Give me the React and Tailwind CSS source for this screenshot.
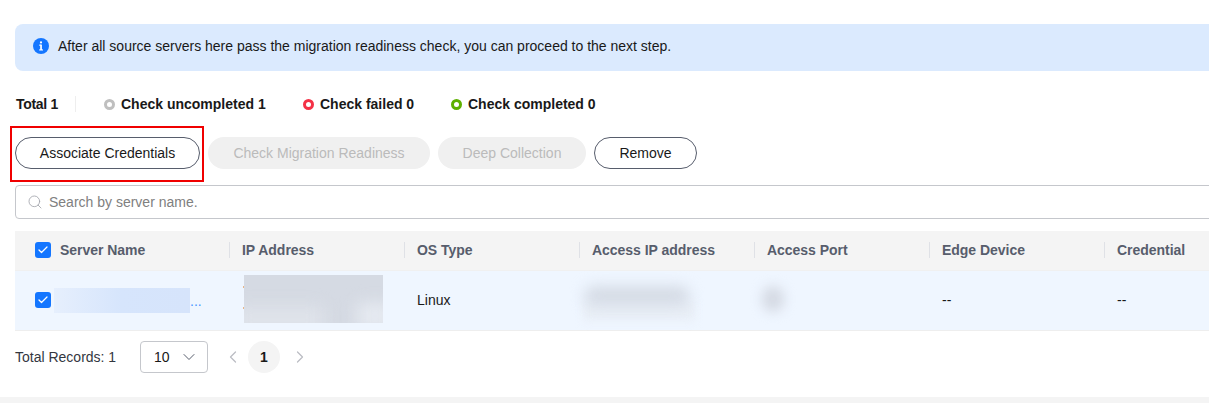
import React from "react";
import { ChevronDown, ChevronLeft, ChevronRight, Search, Check } from "lucide-react";

function Box() {
  return (
    <span className="flex h-4 w-4 shrink-0 items-center justify-center rounded-[3px] bg-[#1476ff]">
      <Check size={12} strokeWidth={2.5} color="#fff" />
    </span>
  );
}

function Stat({ ring, label, className }) {
  return (
    <div className={`flex items-center whitespace-nowrap ${className}`}>
      <span className={`h-[11px] w-[11px] shrink-0 rounded-full border-[3px] ${ring}`} />
      <span className="ml-[6px] font-bold text-[#191919]">{label}</span>
    </div>
  );
}

function Head({ children, first }) {
  return (
    <div className="flex h-full items-center">
      {first ? null : <span className="h-4 w-px bg-[#dfe1e6]" />}
      <span className={`font-bold tracking-[-0.03px] text-[#575d6c] ${first ? "" : "ml-[12px]"}`}>{children}</span>
    </div>
  );
}

const cols = "grid grid-cols-[214px_175px_175px_175px_175px_175px_116px]";

export default function App() {
  return (
    <div className="relative h-[403px] w-[1209px] overflow-hidden bg-white font-['Liberation_Sans',Arial,sans-serif] text-[14px] leading-[20px] text-[#191919]">
      <div className="flex h-[397px] w-[1224px] flex-col pl-[15px] pt-[24px]">
        <div className="flex h-[47px] shrink-0 items-center rounded-[8px] bg-[#dbeafe] pb-[3px] pl-[18px]">
          <svg width="16" height="16" viewBox="0 0 16 16" className="shrink-0">
            <circle cx="8" cy="8" r="8" fill="#1476ff" />
            <rect x="7.2" y="6.6" width="1.7" height="5.4" fill="#fff" />
            <rect x="6.2" y="6.6" width="2" height="1.1" fill="#fff" />
            <rect x="6.2" y="11.4" width="3.8" height="1.1" fill="#fff" />
            <circle cx="8" cy="4.4" r="1.1" fill="#fff" />
          </svg>
          <span className="ml-[9px] text-[#191919]">After all source servers here pass the migration readiness check, you can proceed to the next step.</span>
        </div>

        <div className="mt-[23px] flex h-[20px] shrink-0 items-center pl-px">
          <span className="w-[43px] whitespace-nowrap font-bold tracking-[-0.3px]">Total 1</span>
          <span className="ml-[16px] h-[16px] w-px bg-[#eeeeee]" />
          <Stat ring="border-[#bfbfbf]" label="Check uncompleted 1" className="ml-[28px] w-[161px]" />
          <Stat ring="border-[#f43146]" label="Check failed 0" className="ml-[38px] w-[111px]" />
          <Stat ring="border-[#5eb000]" label="Check completed 0" className="ml-[37px]" />
        </div>

        <div className="mt-[23px] flex h-[32px] shrink-0 items-center gap-[8px]">
          <div className="relative">
            <button className="h-[32px] w-[185px] rounded-full border border-[#575d6c] bg-white text-center">Associate Credentials</button>
            <div className="absolute left-[-5px] top-[-11px] h-[56px] w-[194px] border-2 border-[#f00000]" />
          </div>
          <button className="h-[32px] w-[222px] rounded-full bg-[#f0f0f0] text-center text-[#bbbbbb]">Check Migration Readiness</button>
          <button className="h-[32px] w-[148px] rounded-full bg-[#f0f0f0] text-center text-[#bbbbbb]">Deep Collection</button>
          <button className="h-[32px] w-[103px] rounded-full border border-[#575d6c] bg-white text-center">Remove</button>
        </div>

        <div className="mt-[16px] flex h-[34px] shrink-0 items-center rounded-[4px] border border-[#c5c7cc] pl-[11px]">
          <Search size={16} strokeWidth={1.3} color="#a3a6ad" />
          <span className="ml-[6px] text-[#808080]">Search by server name.</span>
        </div>

        <div className={`${cols} mt-[12px] h-[40px] shrink-0 border-b border-[#f0f0f0] bg-[#f4f4f4] pb-[1px]`}>
          <div className="flex h-full items-center pl-[20px]">
            <Box />
            <span className="ml-[9px]"><Head first>Server Name</Head></span>
          </div>
          <Head>IP Address</Head>
          <Head>OS Type</Head>
          <Head>Access IP address</Head>
          <Head>Access Port</Head>
          <Head>Edge Device</Head>
          <Head>Credential</Head>
        </div>

        <div className={`${cols} h-[60px] shrink-0 border-b border-[#eeeeee] bg-[#eff6ff] pb-[1px]`}>
          <div className="flex h-full items-center pl-[20px]">
            <Box />
            <div className="ml-[3px] h-[25px] w-[136px] bg-gradient-to-r from-[#e6effd] via-[#d6e5fc] to-[#d6e4fb]" />
            <span className="mt-[1px] text-[#4a97ff]">...</span>
          </div>
          <div className="flex h-full items-center pb-[2px] pl-[14px]">
            <div className="flex h-[48px] w-px flex-col pt-[11px]">
              <span className="h-[2px] w-px bg-[#e8b68a]" />
              <span className="mt-[19px] h-[2px] w-px bg-[#e8b68a]" />
            </div>
            <div className="relative h-[48px] w-[139px] overflow-hidden bg-[#d5dae3]">
              <div className="absolute bottom-[-10px] left-[-10px] h-[26px] w-[90px] bg-[#dfe3ea] blur-sm" />
              <div className="absolute bottom-[-6px] right-[-10px] h-[26px] w-[36px] bg-[#e6eaf1] blur-sm" />
            </div>
          </div>
          <div className="flex h-full items-center pl-[13px]">Linux</div>
          <div className="relative flex h-full items-center pl-[5px]">
            <div className="absolute left-[4px] top-[30px] h-[20px] w-[112px] bg-[#e9eff7] blur-[4px]" />
            <div className="relative mb-[8px] h-[20px] w-[106px] rounded-full bg-[#d5dbe5] blur-[7px]" />
          </div>
          <div className="flex h-full items-center pl-[8px]">
            <div className="mb-[2px] h-[26px] w-[22px] rounded-full bg-[#d5dae4] blur-[6px]" />
          </div>
          <div className="flex h-full items-center pl-[13px]">--</div>
          <div className="flex h-full items-center pl-[13px]">--</div>
        </div>

        <div className="mt-[10px] flex h-[32px] shrink-0 items-center">
          <span className="w-[125px] text-[#33373f]">Total Records: 1</span>
          <div className="flex h-[32px] w-[68px] items-center rounded-[4px] border border-[#c5c7cc] pl-[13px]">
            <span>10</span>
            <ChevronDown size={20} strokeWidth={1.2} color="#575d6c" className="ml-[9px]" />
          </div>
          <ChevronLeft size={20} strokeWidth={1.5} color="#bbbdc3" className="ml-[15px]" />
          <span className="ml-[5px] flex h-[32px] w-[32px] items-center justify-center rounded-full bg-[#f4f4f4] font-bold">1</span>
          <ChevronRight size={20} strokeWidth={1.5} color="#bbbdc3" className="ml-[10px]" />
        </div>
      </div>
      <div className="h-[6px] w-full bg-[#f4f4f4]" />
    </div>
  );
}
